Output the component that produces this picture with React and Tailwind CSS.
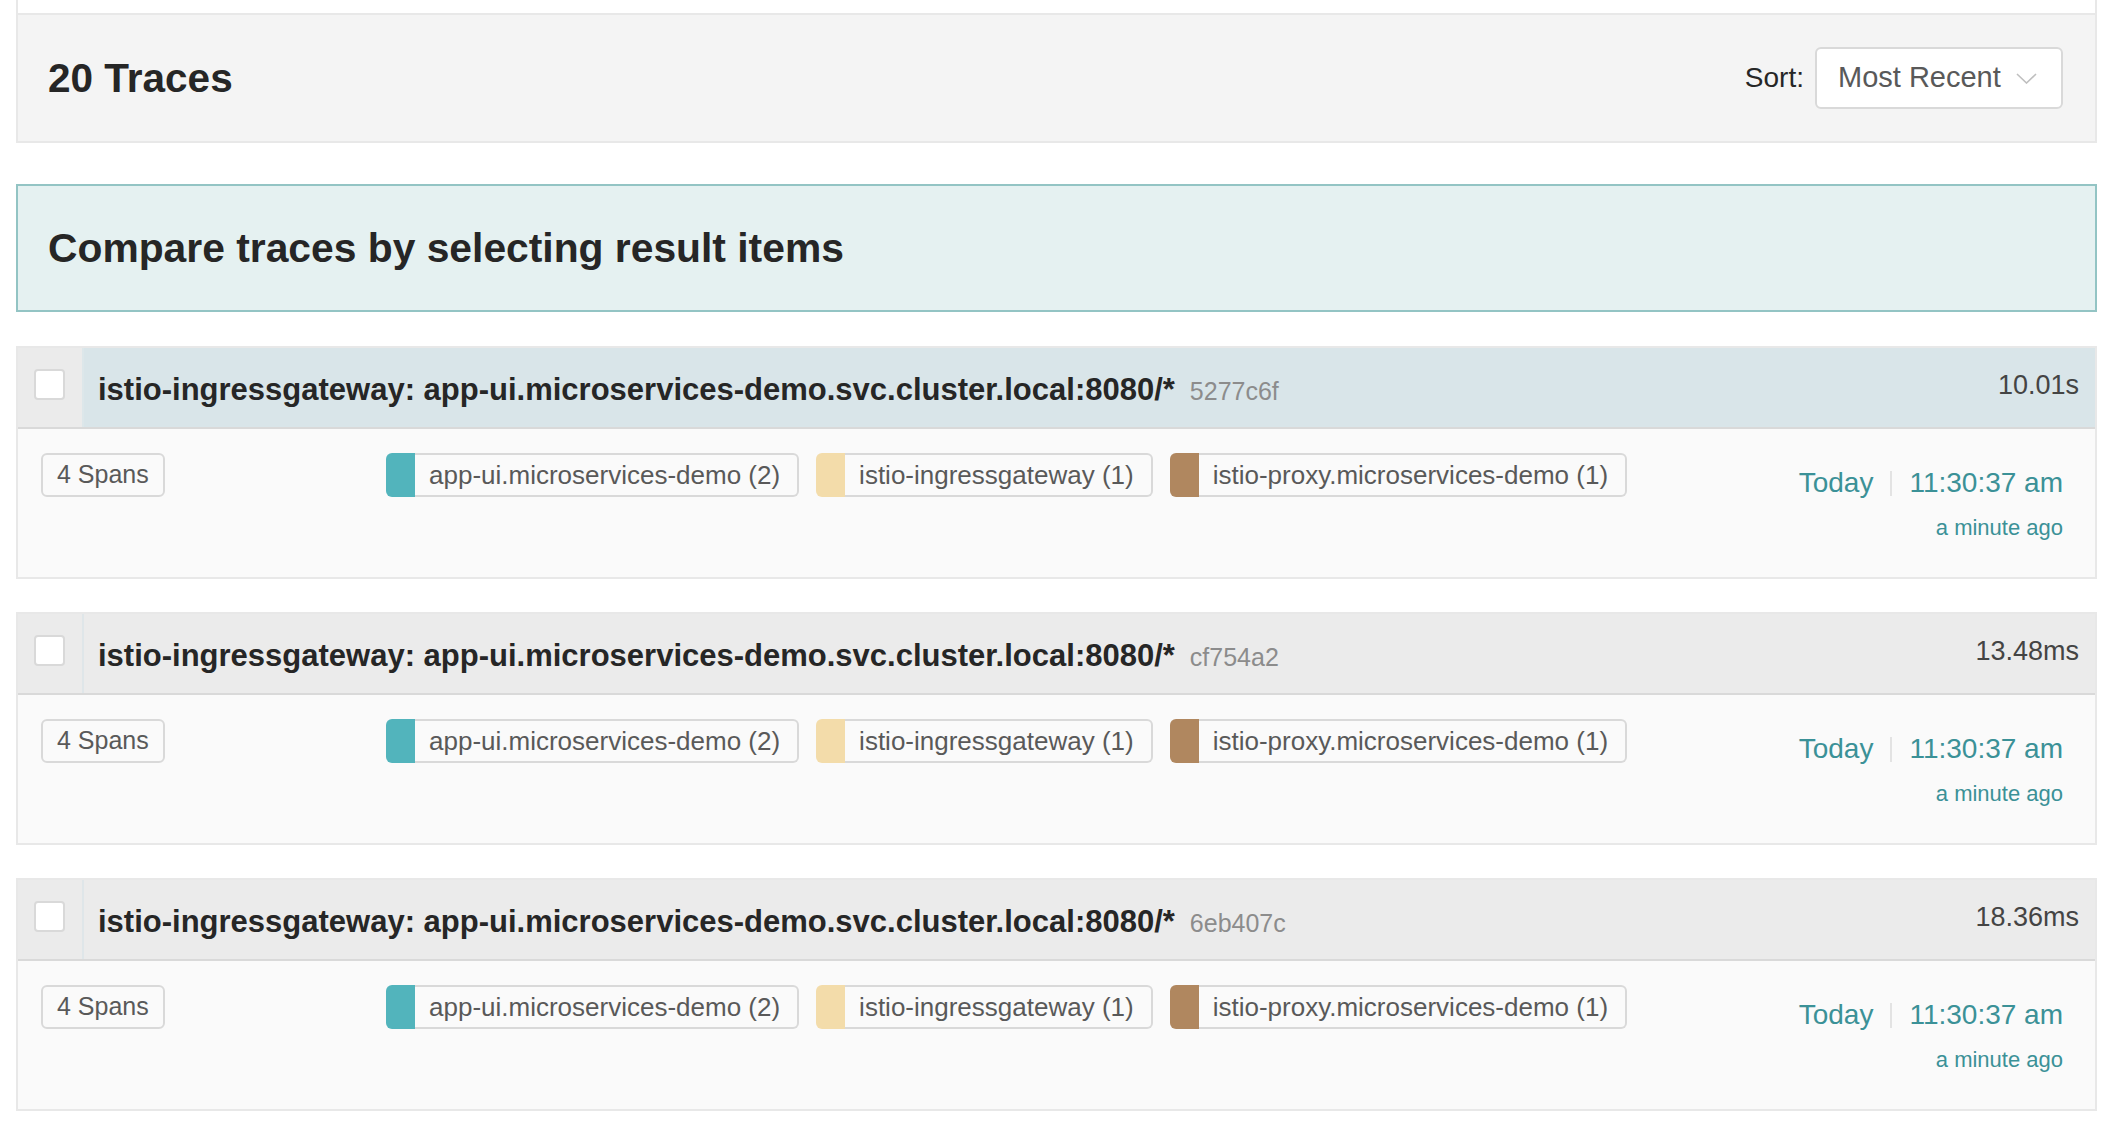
import React from "react";

const traces = [
  { id: "5277c6f", dur: "10.01s", hover: true },
  { id: "cf754a2", dur: "13.48ms", hover: false },
  { id: "6eb407c", dur: "18.36ms", hover: false },
];

const services = [
  { name: "app-ui.microservices-demo (2)", color: "bg-[#52b4bc]" },
  { name: "istio-ingressgateway (1)", color: "bg-[#f3dcaa]" },
  { name: "istio-proxy.microservices-demo (1)", color: "bg-[#b0875f]" },
];

function TraceItem({ t, first }) {
  return (
    <div
      className={`${first ? "mt-[34px]" : "mt-[33px]"} border-x-2 border-t-2 border-b-2 border-[#e8e8e8]`}
    >
      <div className="flex h-[81px] border-b-2 border-[#d9d9d9]">
        <div className="w-[64px] shrink-0 bg-[#ebebeb] pl-[16px] pt-[21px]">
          <div className="h-[31px] w-[31px] rounded-[4px] border-2 border-[#d9d9d9] bg-white" />
        </div>
        <div
          className={`flex flex-1 items-start justify-between border-l-2 ${
            t.hover ? "border-[#dde7ea] bg-[#d9e5e9]" : "border-[#dfe6e9] bg-[#ebebeb]"
          } pl-[14px] pr-[16px]`}
        >
          <div className="pt-[24px] leading-[36px]">
            <span className="text-[31px] font-bold text-[#262626]">
              istio-ingressgateway: app-ui.microservices-demo.svc.cluster.local:8080/*
            </span>
            <span className="ml-[15px] text-[25px] text-[#8c8c8c]">{t.id}</span>
          </div>
          <div className="pt-[21px] text-[27px] leading-[32px] text-[#444444]">{t.dur}</div>
        </div>
      </div>
      <div className="flex h-[148px] items-start bg-[#fafafa] pl-[23px] pr-[32px] pt-[24px]">
        <div className="w-[345px] shrink-0">
          <div className="inline-flex h-[44px] items-center rounded-[6px] border-2 border-[#d9d9d9] px-[14px] text-[25px] text-[#595959]">
            4 Spans
          </div>
        </div>
        <div className="flex gap-[17px]">
          {services.map((s) => (
            <div key={s.name} className="flex h-[44px]">
              <div className={`w-[29px] rounded-l-[6px] ${s.color}`} />
              <div className="flex items-center rounded-r-[6px] border-2 border-l-0 border-[#d9d9d9] pl-[14px] pr-[17px] text-[26px] text-[#595959]">
                {s.name}
              </div>
            </div>
          ))}
        </div>
        <div className="ml-auto mt-[14px] flex flex-col items-end text-[#3b9197]">
          <div className="flex h-[32px] items-center text-[28px] leading-[32px]">
            <span>Today</span>
            <span className="mx-[17px] inline-block h-[25px] w-[2px] bg-[#e3e3e3]" />
            <span>11:30:37 am</span>
          </div>
          <div className="mt-[16px] text-[22px] leading-[26px]">a minute ago</div>
        </div>
      </div>
    </div>
  );
}

export default function App() {
  return (
    <div className="min-h-[1132px] bg-white pl-[16px] pr-[13px] font-['Liberation_Sans',Arial,sans-serif]">
      <div className="h-[13px] border-x-2 border-[#e8e8e8]" />
      <div className="flex h-[130px] items-center justify-between border-2 border-[#e8e8e8] bg-[#f4f4f4] pl-[30px] pr-[32px]">
        <h2 className="text-[40.5px] font-bold leading-none text-[#262626]">20 Traces</h2>
        <div className="flex items-center">
          <span className="mr-[11px] text-[28px] text-[#262626]">Sort:</span>
          <div className="flex h-[62px] w-[248px] items-center justify-between rounded-[6px] border-2 border-[#d9d9d9] bg-white pl-[21px] pr-[24px]">
            <span className="text-[29px] text-[#595959]">Most Recent</span>
            <svg width="21" height="11" viewBox="0 0 21 11">
              <polyline points="1,1 10.5,10 20,1" fill="none" stroke="#bfbfbf" strokeWidth="1.6" />
            </svg>
          </div>
        </div>
      </div>
      <div className="mt-[41px] flex h-[128px] items-center border-2 border-[#93c4c4] bg-[#e5f1f1] pl-[30px]">
        <h3 className="text-[40.8px] font-bold leading-none text-[#262626]">
          Compare traces by selecting result items
        </h3>
      </div>
      {traces.map((t, i) => (
        <TraceItem key={t.id} t={t} first={i === 0} />
      ))}
    </div>
  );
}
